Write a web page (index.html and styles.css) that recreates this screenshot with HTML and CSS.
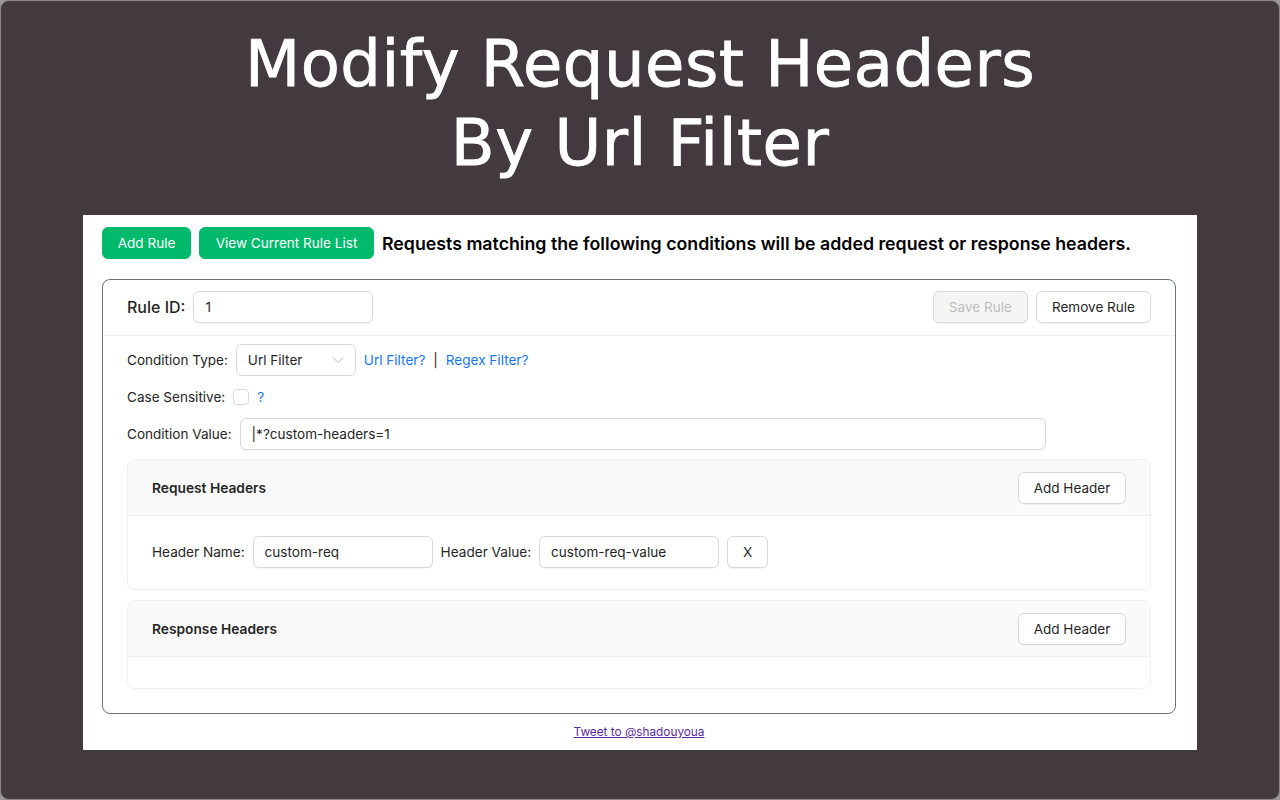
FILE: index.html
```html
<!DOCTYPE html>
<html>

<head>
    <title>Modify Request Headers</title>
    <link rel="stylesheet" href="styles.css">
</head>

<body>

    <div class="screen">
        <h1 class="title">Modify Request Headers<br>By Url Filter</h1>

        <div class="panel">
            <div class="toolbar">
                <button class="btn btn-green btn-add">Add Rule</button>
                <button class="btn btn-green btn-view">View Current Rule List</button>
                <span class="tip">Requests matching the following conditions will be added request or response headers.</span>
            </div>

            <div class="rule-card">
                <div class="rule-head">
                    <label class="rule-id">Rule ID:</label>
                    <input class="input input-id" value="1">
                    <div class="spacer"></div>
                    <button class="btn" disabled>Save Rule</button>
                    <button class="btn">Remove Rule</button>
                </div>

                <div class="rule-body">
                    <div class="row">
                        <span>Condition Type:</span>
                        <div class="select">
                            <span>Url Filter</span>
                            <svg class="arrow" viewBox="0 0 12 8" width="12" height="8">
                                <path d="M1 1.5 6 6.5 11 1.5" fill="none" stroke="#b5b5b5" stroke-width="1"></path>
                            </svg>
                        </div>
                        <a class="help" href="#">Url Filter?</a>
                        <span class="sep">|</span>
                        <a class="help" href="#">Regex Filter?</a>
                    </div>

                    <div class="row row-case">
                        <span>Case Sensitive:</span>
                        <span class="checkbox"></span>
                        <a class="help" href="#">?</a>
                    </div>

                    <div class="row row-value">
                        <span>Condition Value:</span>
                        <input class="input input-value" value="|*?custom-headers=1">
                    </div>

                    <div class="section">
                        <div class="section-head">
                            <span>Request Headers</span>
                            <button class="btn btn-header">Add Header</button>
                        </div>
                        <div class="section-body">
                            <span>Header Name:</span>
                            <input class="input input-header" value="custom-req">
                            <span>Header Value:</span>
                            <input class="input input-header" value="custom-req-value">
                            <button class="btn btn-x">X</button>
                        </div>
                    </div>

                    <div class="section section-empty">
                        <div class="section-head">
                            <span>Response Headers</span>
                            <button class="btn btn-header">Add Header</button>
                        </div>
                    </div>
                </div>
            </div>

            <div class="footer">
                <a class="tweet" href="#">Tweet to @shadouyoua</a>
            </div>
        </div>
    </div>

</body>

</html>
```

FILE: styles.css
```css
* {
    box-sizing: border-box;
}

body {
    margin: 0;
    background: #9a9a9a;
    font-family: Inter, "Liberation Sans", sans-serif;
    font-size: 13.55px;
    color: #262626;
}

.screen {
    width: 1280px;
    height: 800px;
    padding-top: 24px;
    background: #433a3f;
    border: 1px solid #8a8587;
    border-radius: 9px;
    overflow: hidden;
}

.title {
    margin: 0 0 32px;
    font-family: "DejaVu Sans", sans-serif;
    font-size: 64px;
    font-weight: 400;
    line-height: 79px;
    letter-spacing: 0.5px;
    text-align: center;
    color: #fff;
    -webkit-text-stroke: 0.8px #fff;
}

.panel {
    width: 1114px;
    height: 535px;
    margin-left: 82px;
    padding: 12px 21px 0 19px;
    background: #fff;
}

.toolbar {
    display: flex;
    align-items: center;
    gap: 8px;
}

.tip {
    font-size: 17.75px;
    font-weight: 600;
    color: #000;
    white-space: nowrap;
}

.btn {
    height: 32px;
    padding: 0 15px;
    background: #fff;
    border: 1px solid #d9d9d9;
    border-radius: 6px;
    box-shadow: 0 1px 1px rgba(0, 0, 0, 0.05);
    font-family: inherit;
    font-size: 13.55px;
    color: #262626;
}

.btn:disabled {
    background: #f5f5f5;
    color: #bfbfbf;
}

.btn-green {
    background: #00ba6c;
    border-color: #00ba6c;
    color: #fff;
}

.btn-add {
    width: 89px;
    padding: 0;
}

.btn-view {
    width: 175px;
    padding: 0;
}

.btn-header {
    width: 108px;
    padding: 0;
}

.btn-x {
    width: 41px;
    padding: 0;
}

.rule-card {
    height: 435px;
    margin-top: 20px;
    border: 1px solid #6e7377;
    border-radius: 8px;
}

.rule-head {
    display: flex;
    align-items: center;
    gap: 8px;
    height: 56px;
    padding: 0 24px 2px;
    border-bottom: 1px solid #f0f0f0;
}

.rule-id {
    font-size: 16px;
    font-weight: 500;
}

.spacer {
    flex: 1;
}

.input {
    height: 32px;
    padding: 0 11px;
    background: #fff;
    border: 1px solid #d9d9d9;
    border-radius: 6px;
    box-shadow: 0 1px 1px rgba(0, 0, 0, 0.04);
    font-family: inherit;
    font-size: 13.55px;
    color: #262626;
    outline: none;
}

.input-id {
    width: 180px;
}

.input-value {
    width: 806px;
}

.input-header {
    width: 180px;
}

.rule-body {
    padding: 8px 24px 0;
}

.row {
    display: flex;
    align-items: center;
    gap: 8px;
    height: 32px;
}

.row-case {
    height: 32px;
    margin-top: 5px;
}

.row-value {
    margin-top: 5px;
}

.select {
    display: flex;
    align-items: center;
    justify-content: space-between;
    width: 120px;
    height: 32px;
    padding: 0 11px;
    border: 1px solid #d9d9d9;
    border-radius: 6px;
}

.help {
    color: #1677ff;
    text-decoration: none;
}

.sep {
    color: #262626;
}

.checkbox {
    width: 16px;
    height: 16px;
    border: 1px solid #d9d9d9;
    border-radius: 4px;
}

.section {
    height: 131px;
    margin-top: 9px;
    border: 1px solid #f0f0f0;
    border-radius: 8px;
    overflow: hidden;
}

.section + .section {
    margin-top: 10px;
}

.section-empty {
    height: 89px;
}

.section-head {
    display: flex;
    align-items: center;
    justify-content: space-between;
    height: 56px;
    padding: 0 24px;
    background: #fafafa;
    border-bottom: 1px solid #f0f0f0;
    font-size: 13.75px;
    font-weight: 600;
}

.section-body {
    display: flex;
    align-items: center;
    gap: 8px;
    padding: 20px 24px;
    font-size: 13.6px;
}

.footer {
    margin-top: 11px;
    font-size: 11.8px;
    text-align: center;
}

.tweet {
    color: #5a2ca0;
}
```
